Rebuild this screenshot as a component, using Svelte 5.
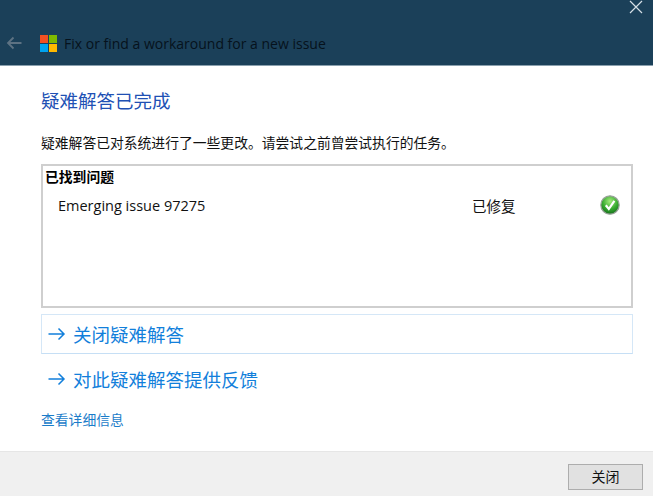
<script lang="ts">
    const fixes = [{ name: "Emerging issue 97275", status: "已修复" }];
</script>

<div class="window">
    <header class="titlebar">
        <button class="close-x" aria-label="关闭">
            <svg width="14" height="14" viewBox="0 0 14 14">
                <path d="M1 1 L13 13 M13 1 L1 13" stroke="#d5dfe6" stroke-width="1.2" fill="none" />
            </svg>
        </button>
        <div class="nav">
            <svg class="back" width="16" height="14" viewBox="0 0 16 14">
                <path d="M15.5 7 H2 M7.5 1.5 L2 7 L7.5 12.5" stroke="#5d7283" stroke-width="1.8" fill="none" />
            </svg>
            <svg class="logo" width="17" height="17" viewBox="0 0 17 17">
                <rect width="8" height="8" fill="#f25022" />
                <rect x="9" width="8" height="8" fill="#7fba00" />
                <rect y="9" width="8" height="8" fill="#00a4ef" />
                <rect x="9" y="9" width="8" height="8" fill="#ffb900" />
            </svg>
            <span class="app-title">Fix or find a workaround for a new issue</span>
        </div>
    </header>

    <main class="content">
        <h1>疑难解答已完成</h1>
        <p class="description">疑难解答已对系统进行了一些更改。请尝试之前曾尝试执行的任务。</p>

        <section class="results">
            <h2>已找到问题</h2>
            {#each fixes as fix}
                <div class="row">
                    <span class="name">{fix.name}</span>
                    <span class="status">{fix.status}</span>
                    <svg class="check" width="20" height="20" viewBox="0 0 20 20">
                        <defs>
                            <radialGradient id="ball" cx="50%" cy="30%" r="70%">
                                <stop offset="0%" stop-color="#a4ec7c" />
                                <stop offset="60%" stop-color="#36a92f" />
                                <stop offset="100%" stop-color="#16701c" />
                            </radialGradient>
                        </defs>
                        <circle cx="10" cy="10" r="9.2" fill="url(#ball)" stroke="#98a298" stroke-width="1.2" />
                        <path d="M5.8 10.2 L8.8 14 L14.4 5.8" stroke="#fff" stroke-width="2.2" fill="none" />
                    </svg>
                </div>
            {/each}
        </section>

        <a class="action boxed" href="#close">
            <span class="arrow">
                <svg width="18" height="14" viewBox="0 0 18 14">
                    <path d="M0.5 7 H16 M10.5 1.5 L16 7 L10.5 12.5" stroke="#127fdb" stroke-width="1.5" fill="none" />
                </svg>
            </span>
            关闭疑难解答
        </a>
        <a class="action plain" href="#feedback">
            <span class="arrow">
                <svg width="18" height="14" viewBox="0 0 18 14">
                    <path d="M0.5 7 H16 M10.5 1.5 L16 7 L10.5 12.5" stroke="#127fdb" stroke-width="1.5" fill="none" />
                </svg>
            </span>
            对此疑难解答提供反馈
        </a>
        <a class="details" href="#details">查看详细信息</a>
    </main>

    <footer class="footer">
        <button class="close-button">关闭</button>
    </footer>
</div>

<style>
    :global(body) {
        margin: 0;
        background: #fff;
    }

    .window {
        width: 653px;
        height: 496px;
        display: flex;
        flex-direction: column;
        overflow: hidden;
        font-family: "Open Sans", "Noto Sans CJK SC", sans-serif;
        color: #111;
    }

    .titlebar {
        position: relative;
        height: 65px;
        flex: none;
        display: flex;
        align-items: flex-end;
        background: #1b4059;
        border-bottom: 1px solid #8aa0ae;
    }

    .close-x {
        position: absolute;
        top: 0;
        right: 10px;
        padding: 0;
        border: none;
        background: none;
        line-height: 0;
    }

    .nav {
        display: flex;
        align-items: center;
        height: 44px;
        padding-left: 6px;
    }

    .back {
        margin-right: 18px;
    }

    .logo {
        margin-right: 7px;
    }

    .app-title {
        font-size: 14px;
        color: #06121c;
    }

    .content {
        flex: 1;
        padding: 0 20px 0 41px;
    }

    h1 {
        margin: 22px 0 0;
        font-size: 18.5px;
        line-height: 26px;
        font-weight: 400;
        color: #2050b4;
    }

    .description {
        margin: 19px 0 0;
        font-size: 13.8px;
        line-height: 20px;
    }

    .results {
        box-sizing: border-box;
        height: 144px;
        margin-top: 11px;
        padding: 1px 11px 0 2px;
        border: 2px solid #cfcfcf;
    }

    h2 {
        margin: 0;
        font-size: 13.8px;
        line-height: 20px;
        font-weight: 700;
        color: #000;
    }

    .row {
        display: flex;
        align-items: center;
        height: 28px;
        margin-top: 4px;
        padding-left: 13px;
        font-size: 14.5px;
    }

    .name {
        width: 414px;
    }

    .status {
        flex: 1;
    }

    .action {
        display: flex;
        align-items: center;
        gap: 7px;
        box-sizing: border-box;
        height: 40px;
        font-size: 18.5px;
        color: #127fdb;
        text-decoration: none;
    }

    .boxed {
        margin-top: 6px;
        padding-left: 6px;
        border: 1px solid #d5e7f7;
        border-bottom-color: #c6dff5;
    }

    .plain {
        margin-top: 5px;
        padding-left: 7px;
    }

    .arrow {
        display: flex;
    }

    .details {
        display: block;
        margin-top: 11px;
        font-size: 13.8px;
        line-height: 20px;
        color: #1a7cc9;
        text-decoration: none;
    }

    .footer {
        height: 45px;
        flex: none;
        display: flex;
        justify-content: flex-end;
        align-items: flex-start;
        box-sizing: border-box;
        padding: 12px 10px 0 0;
        background: #f0f0f0;
        border-top: 1px solid #e6e6e6;
    }

    .close-button {
        width: 75px;
        height: 26px;
        padding: 0 0 3px;
        background: #e1e1e1;
        border: 1px solid #adadad;
        font-family: inherit;
        font-size: 14px;
        color: #111;
    }
</style>
